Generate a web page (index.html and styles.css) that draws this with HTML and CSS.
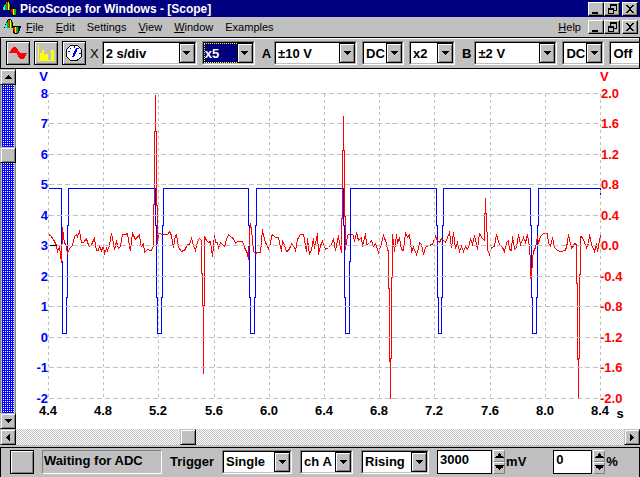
FILE: index.html
```
<!DOCTYPE html>
<html lang="en">
<head>
  <meta charset="UTF-8">
  <title>PicoScope for Windows - [Scope]</title>
  <link rel="stylesheet" href="styles.css">
</head>
<body>
  <!-- shared shapes -->
  <svg class="defs" aria-hidden="true">
    <symbol id="wave" viewBox="0 0 18 16">
      <path d="M0 8h1V5h1V3h1V1h1V0h3v1h1v2h1v4h8v2h-1v3h-1v2h-1v1h-4v-1h-1v-2H9V9H0z" fill="#000"/>
      <path d="M1 6h1V4h1v5H1z" fill="#00ffff"/>
      <path d="M3 3h1V1h1v8H3z" fill="#00c000"/>
      <path d="M5 1h1v8H5z" fill="#ff0000"/>
      <path d="M6 1h1v8H6z" fill="#ffff00"/>
      <path d="M7 3h1v6H7z" fill="#00c000"/>
      <path d="M9 8h1v3H9z" fill="#ff0000"/>
      <path d="M10 8h1v5h-1z" fill="#ff0000"/>
      <path d="M11 8h1v6h-1z" fill="#ffff00"/>
      <path d="M12 8h2v6h-2z" fill="#00c000"/>
      <path d="M14 8h1v4h-1z" fill="#0000ff"/>
    </symbol>
    <symbol id="min" viewBox="0 0 12 10"><path d="M2 8h6v2H2z"/></symbol>
    <symbol id="restore" viewBox="0 0 12 10">
      <path d="M4 0h7v7H8v3H2V4h2zM5 2v2h3v2h2V2zM3 6v3h4V6z" fill-rule="evenodd"/>
    </symbol>
    <symbol id="close" viewBox="0 0 12 10">
      <path d="M2 1h2v1h1v1h2V2h1V1h2v1H9v1H8v1H7v2h1v1h1v1h1v1H8V8H7V7H5v1H4v1H2V8h1V7h1V6h1V4H4V3H3V2H2z"/>
    </symbol>
    <symbol id="down" viewBox="0 0 7 4"><path d="M0 0h7v1H6v1H5v1H4v1H3V3H2V2H1V1H0z"/></symbol>
    <symbol id="up" viewBox="0 0 7 4"><path d="M3 0h1v1h1v1h1v1h1v1H0V3h1V2h1V1h1z"/></symbol>
    <symbol id="left" viewBox="0 0 4 7"><path d="M4 0v7H3V6H2V5H1V4H0V3h1V2h1V1h1V0z"/></symbol>
    <symbol id="right" viewBox="0 0 4 7"><path d="M0 0h1v1h1v1h1v1h1v1H3v1H2v1H1v1H0z"/></symbol>
  </svg>

  <header class="titlebar">
    <svg class="wave"><use href="#wave"/></svg>
    <h1>PicoScope for Windows - [Scope]</h1>
    <div class="winbtns">
      <button aria-label="Minimize"><svg><use href="#min"/></svg></button>
      <button aria-label="Restore"><svg><use href="#restore"/></svg></button>
      <button class="x" aria-label="Close"><svg><use href="#close"/></svg></button>
    </div>
  </header>

  <nav class="menubar">
    <svg class="wave"><use href="#wave"/></svg>
    <button><u>F</u>ile</button>
    <button><u>E</u>dit</button>
    <button>Settings</button>
    <button><u>V</u>iew</button>
    <button><u>W</u>indow</button>
    <button>Examples</button>
    <button class="help"><u>H</u>elp</button>
    <div class="winbtns">
      <button aria-label="Minimize scope"><svg><use href="#min"/></svg></button>
      <button aria-label="Restore scope"><svg><use href="#restore"/></svg></button>
      <button class="x" aria-label="Close scope"><svg><use href="#close"/></svg></button>
    </div>
  </nav>

  <div class="toolbar">
    <div class="tools">
      <button class="tool" aria-label="Scope">
        <svg viewBox="0 0 20 20"><path d="M1 10V9h1V8h1V6h1V5h1V4h3v1h1v1h1v2h1v1h1v1h7v1h-1v2h-1v2h-1v1h-4v-1h-1v-1h-1v-2h-1v-2z" fill="#f00"/></svg>
      </button>
      <button class="tool" aria-label="Spectrum">
        <svg viewBox="0 0 20 20">
          <path d="M2 2h1v15h16v1H2z" fill="#ff0"/>
          <path d="M4 10h2V7h2v5h1v-1h3v6H4zM15 7h3v10h-3z" fill="#ff0"/>
        </svg>
      </button>
      <button class="tool" aria-label="Meter">
        <svg viewBox="0 0 20 20">
          <circle cx="10" cy="10" r="8" fill="#fff" stroke="#000"/>
          <path d="M4 8l2 1M6 5l1 1M10 3v2M15 5l-1 1M15 10h2" stroke="#00f" fill="none"/>
          <path d="M9 14l4-9" stroke="#00f" stroke-width="2"/>
        </svg>
      </button>
    </div>
    <label class="thin" for="timebase">X</label>
    <span class="combo w95"><select id="timebase"><option>2 s/div</option></select><i><svg><use href="#down"/></svg></i></span>
    <span class="combo w53 active"><select aria-label="X zoom"><option>x5</option></select><i><svg><use href="#down"/></svg></i></span>
    <label for="rangeA">A</label>
    <span class="combo w83"><select id="rangeA"><option>±10 V</option></select><i><svg><use href="#down"/></svg></i></span>
    <span class="combo w42"><select aria-label="A coupling"><option>DC</option></select><i><svg><use href="#down"/></svg></i></span>
    <span class="combo w46"><select aria-label="A zoom"><option>x2</option></select><i><svg><use href="#down"/></svg></i></span>
    <label for="rangeB">B</label>
    <span class="combo w83"><select id="rangeB"><option>±2 V</option></select><i><svg><use href="#down"/></svg></i></span>
    <span class="combo w42"><select aria-label="B coupling"><option>DC</option></select><i><svg><use href="#down"/></svg></i></span>
    <span class="combo w53"><select aria-label="B zoom"><option>Off</option></select><i><svg><use href="#down"/></svg></i></span>
  </div>

  <main class="scope">
    <div class="vscroll">
      <button class="arrow" aria-label="Scroll up"><svg class="h"><use href="#up"/></svg></button>
      <input type="range" min="0" max="312" value="62" aria-label="Vertical offset">
      <button class="arrow" aria-label="Scroll down"><svg class="h"><use href="#down"/></svg></button>
    </div>
    <svg class="plot" viewBox="16 69 624 360">
      <g class="lines" transform="translate(.5 .5)">
        <path class="chA" d="M48 188H61V261H62V333H66V297H67V225H68V188H155V225H156V297H157V333H161V297H162V225H163V188H248V225H249V297H250V333H254V297H255V225H256V188H343V225H344V297H345V333H349V261H350V188H436V225H437V297H438V333H441V297H442V225H443V188H530V225H531V297H532V333H536V297H537V225H538V188H600V194"/>
        <polyline class="chB" points="48,234 50,235 53,239 56,245 57,251 59,246 60,255 61,262 62,227 64,243 65,243 67,253 69,248 72,245 74,236 76,234 77,236 79,231 81,242 83,242 86,238 87,242 89,246 91,244 94,238 96,250 98,250 99,246 101,250 103,246 104,253 106,248 107,250 109,245 111,233 112,238 114,249 116,241 118,248 120,246 122,234 125,234 127,233 129,246 130,250 131,240 132,233 135,239 139,234 140,243 141,246 143,243 144,252 147,249 150,250 152,249 153,245 153,204 154,204 154,131 155,131 155,94 155,131 156,131 156,205 157,205 157,243 158,233
          159,233 162,234 167,234 169,231 171,235 173,247 175,235 176,234 178,247 181,251 183,250 184,250 187,244 189,244 191,238 193,245 195,250 197,241 199,238 201,240 201,273 202,273 202,305 203,305 203,373 203,305 204,305 204,236 206,240 208,242 210,241 212,256 214,234 215,242 217,242 218,248 220,242 223,245 224,246 226,239 228,234 231,237 233,238 235,243 237,241 242,241 244,247 246,251 247,253 248,259 249,233 250,223 252,238 253,251 255,253 257,252 260,252 262,229 263,235 265,242 268,248 270,243 271,236 272,234 275,237 278,237 279,242 281,251 282,240 284,245 286,251 288,250 290,246 291,243 293,245 295,250 297,239 300,234
          303,234 305,245 306,251 307,238 309,254 311,249 313,238 314,248 317,233 318,254 320,245 322,241 325,249 328,247 330,245 332,242 333,238 335,250 338,235 339,243 341,252 341,218 342,218 342,150 343,150 343,115 343,150 344,150 344,215 345,217 345,249 347,235 350,233 353,235 354,241 356,232 358,240 361,237 362,246 365,233 366,244 369,243 371,240 373,246 375,243 378,252 380,246 383,235 386,243 387,249 388,251 388,288 389,288 389,361 390,361 390,398 390,358 391,358 391,277 392,277 392,234 394,251 396,234 397,242 399,238 401,249 403,250 405,232 407,237 409,234 411,251 413,247 416,254 418,248 419,242 421,244 423,254 425,247 428,245 432,244 435,236 437,240 439,242 441,238 443,240 445,242 447,237 449,232
          451,247 453,232 455,248 457,242 459,251 461,246 463,251 465,246 467,249 469,244 470,238 472,244 474,235 476,243 477,249 479,233 482,238 484,240 484,213 485,213 485,197 485,213 486,213 487,249 489,254 491,247 494,246 496,234 499,244 502,247 504,251 506,242 508,240 509,249 511,250 512,236 514,249 516,247 518,234 520,244 523,237 525,242 527,234 529,247 530,262 530,278 531,278 532,258 533,251 535,247 537,236 538,243 540,236 543,233 547,233 548,243 550,246 552,237 554,247 557,250 560,251 565,250 567,242 568,234 571,248 572,247 574,243 576,244 576,283 577,283 577,359 578,359 578,398 578,358 579,358 579,274 580,274 580,236 582,237 584,242 586,247 588,243 589,234 591,244 594,251 596,243 597,251 600,235"/>
        <path class="grid rows" d="M48 93H600M48 123H600M48 154H600M48 184H600M48 215H600M48 245H600M48 276H600M48 306H600M48 337H600M48 367H600M48 398H600"/>
        <path class="grid cols" d="M48 93V398M103 93V398M158 93V398M214 93V398M269 93V398M324 93V398M379 93V398M434 93V398M490 93V398M545 93V398M600 93V398"/>
        <path class="mark" d="M49 245H56"/>
      </g>
      <g class="axis left">
        <text x="48" y="81">V</text>
        <text x="48" y="98">8</text>
        <text x="48" y="128">7</text>
        <text x="48" y="159">6</text>
        <text x="48" y="189">5</text>
        <text x="48" y="220">4</text>
        <text x="48" y="250">3</text>
        <text x="48" y="281">2</text>
        <text x="48" y="311">1</text>
        <text x="48" y="342">0</text>
        <text x="48" y="372">-1</text>
        <text x="48" y="403">-2</text>
      </g>
      <g class="axis right">
        <text x="600" y="81">V</text>
        <text x="601" y="98">2.0</text>
        <text x="601" y="128">1.6</text>
        <text x="601" y="159">1.2</text>
        <text x="601" y="189">0.8</text>
        <text x="601" y="220">0.4</text>
        <text x="601" y="250">0.0</text>
        <text x="600" y="281">-0.4</text>
        <text x="600" y="311">-0.8</text>
        <text x="600" y="342">-1.2</text>
        <text x="600" y="372">-1.6</text>
        <text x="600" y="403">-2.0</text>
      </g>
      <g class="axis bottom">
        <text x="48" y="415">4.4</text>
        <text x="103" y="415">4.8</text>
        <text x="158" y="415">5.2</text>
        <text x="214" y="415">5.6</text>
        <text x="269" y="415">6.0</text>
        <text x="324" y="415">6.4</text>
        <text x="379" y="415">6.8</text>
        <text x="434" y="415">7.2</text>
        <text x="490" y="415">7.6</text>
        <text x="545" y="415">8.0</text>
        <text x="600" y="415">8.4</text>
        <text x="620" y="418">s</text>
      </g>
    </svg>
  </main>

  <div class="hscroll">
    <button class="arrow" aria-label="Scroll left"><svg class="v"><use href="#left"/></svg></button>
    <input type="range" min="0" max="592" value="164" aria-label="Horizontal offset">
    <button class="arrow" aria-label="Scroll right"><svg class="v"><use href="#right"/></svg></button>
  </div>

  <footer class="status">
    <button class="tool" aria-label="Start or stop"></button>
    <output class="message">Waiting for ADC</output>
    <label for="trigger">Trigger</label>
    <span class="combo w70"><select id="trigger"><option>Single</option></select><i><svg><use href="#down"/></svg></i></span>
    <span class="combo w53"><select aria-label="Trigger channel"><option>ch A</option></select><i><svg><use href="#down"/></svg></i></span>
    <span class="combo w68"><select aria-label="Trigger direction"><option>Rising</option></select><i><svg><use href="#down"/></svg></i></span>
    <div class="field">
      <input class="wide" id="level" type="text" value="3000">
      <div class="spin">
        <button aria-label="Level up"><svg><use href="#up"/></svg></button>
        <button aria-label="Level down"><svg><use href="#down"/></svg></button>
      </div>
      <label for="level">mV</label>
    </div>
    <div class="field last">
      <input id="delay" type="text" value="0">
      <div class="spin">
        <button aria-label="Delay up"><svg><use href="#up"/></svg></button>
        <button aria-label="Delay down"><svg><use href="#down"/></svg></button>
      </div>
      <label for="delay">%</label>
    </div>
  </footer>
</body>
</html>
```
FILE: styles.css
```
* { box-sizing:border-box; }
html, body { margin:0; padding:0; height:100%; }
body {
  display:flex; flex-direction:column;
  background:#c0c0c0; color:#000;
  font-family:"Liberation Sans", Arial, sans-serif;
  font-size:13px; font-weight:bold;
  overflow:hidden;
}
button, input, select {
  font:inherit; color:inherit; margin:0; padding:0;
  border:0; border-radius:0; outline:0;
}
svg { display:block; shape-rendering:crispEdges; }
.defs { position:absolute; width:0; height:0; }
.wave { width:18px; height:16px; flex:none; }

/* title + menu */
.titlebar {
  display:flex; align-items:center; height:17px; flex:none;
  padding:0 2px; background:#000080; color:#fff;
}
.titlebar h1 { margin:0; font-size:12px; line-height:16px; flex:1; }
.winbtns { display:flex; flex:none; }
.winbtns button {
  width:16px; height:14px; padding:1px;
  background:#c0c0c0; color:#000;
  border:1px solid; border-color:#fff #000 #000 #fff;
  box-shadow:inset -1px -1px #808080;
}
.winbtns .x { margin-left:2px; }
.winbtns svg { width:12px; height:10px; }
.menubar {
  display:flex; align-items:center; gap:12px; height:20px; flex:none;
  padding:0 2px 0 4px;
}
.menubar > button {
  background:none; font-size:11px; font-weight:normal; line-height:16px;
}
.menubar .wave { margin-right:-8px; }
.menubar .help { margin-left:auto; }
.menubar .winbtns { margin-left:-5px; }

/* toolbar */
.toolbar {
  display:flex; align-items:center; gap:3px; height:32px; flex:none;
  padding:0 0 0 5px; border:1px solid #000;
  box-shadow:inset 0 1px #fff; overflow:hidden;
}
.tools { display:flex; gap:4px; }
.tool {
  width:24px; height:24px; flex:none; padding:1px;
  background:#c0c0c0; border:1px solid #000;
  box-shadow:inset 1px 1px #fff, inset -1px -1px #808080;
}
.tool svg { width:20px; height:20px; }
.toolbar label { padding-left:4px; }
.toolbar .thin { font-weight:normal; padding-left:1px; }
.toolbar .combo + .combo { margin-left:2px; }

.combo {
  display:grid; height:24px; flex:none;
  border:1px solid; border-color:#808080 #fff #fff #808080;
  background:#fff;
}
.combo select, .combo i { grid-area:1 / 1; }
.combo select {
  appearance:none; width:100%; height:100%;
  padding:0 16px 0 2px; background:#fff;
  border:1px solid; border-color:#000 #c0c0c0 #c0c0c0 #000;
}
.combo i {
  justify-self:end; display:grid; place-items:center;
  width:16px; margin:1px; pointer-events:none;
  background:#c0c0c0; border:1px solid #000;
  box-shadow:inset 1px 1px #fff, inset -1px -1px #808080;
}
.combo i svg { width:7px; height:4px; }
.active select {
  color:#fff; padding-left:1px;
  background:#000080; outline:1px dotted #ff0; outline-offset:-2px;
}
.w95 { width:95px; }
.w83 { width:83px; }
.w70 { width:70px; }
.w68 { width:68px; }
.w53 { width:53px; }
.w46 { width:46px; }
.w42 { width:42px; }

/* plot */
.scope { display:flex; flex:1; min-height:0; background:#fff; }
.plot { flex:1; min-width:0; height:100%; }
.lines path, .lines polyline { fill:none; stroke-width:1; }
.chA { stroke:#00f; }
.chB { stroke:#f00; }
.grid { stroke:#c0c0c0; }
.rows { stroke-dasharray:5 3; }
.cols { stroke-dasharray:3 3; }
.lines .mark { stroke:#000; }
.left { fill:#00f; text-anchor:end; }
.right { fill:#f00; }
.bottom { fill:#000; text-anchor:middle; }

/* scroll bars */
.arrow {
  display:grid; place-items:center; width:16px; height:16px; flex:none;
  background:#c0c0c0; border:1px solid; border-color:#c0c0c0 #000 #000 #c0c0c0;
  box-shadow:inset 1px 1px #fff, inset -1px -1px #808080;
}
.arrow .h { width:7px; height:4px; }
.arrow .v { width:4px; height:7px; }
.vscroll { display:flex; flex-direction:column; width:16px; flex:none; }
.hscroll { display:flex; height:16px; flex:none; }
input[type=range] { appearance:none; flex:1; min-width:0; min-height:0; }
input[type=range]::-webkit-slider-thumb {
  appearance:none; width:16px; height:16px;
  background:#c0c0c0; border:1px solid; border-color:#c0c0c0 #000 #000 #c0c0c0;
  box-shadow:inset 1px 1px #fff, inset -1px -1px #808080;
}
.vscroll input {
  writing-mode:vertical-lr; width:16px;
  background:
    linear-gradient(90deg, #808080 1px, #c0c0c0 1px 2px, transparent 2px 14px, #c0c0c0 14px 15px, #808080 15px),
    conic-gradient(#fff 25%, #00f 0) 0 0 / 2px 2px;
}
.hscroll input {
  height:16px;
  background:repeating-conic-gradient(#c0c0c0 0 25%, #fff 0 50%) 0 0 / 2px 2px;
}

/* status bar */
.status {
  display:flex; align-items:center; height:30px; flex:none;
  margin-top:2px; padding:0 0 2px 9px;
  border:1px solid #000; border-bottom:0;
}
.message {
  width:120px; height:24px; margin:0 8px; padding-left:1px; line-height:20px;
  border:1px solid; border-color:#808080 #fff #fff #808080;
}
.status .combo { margin-right:8px; }
.status > label { margin-right:8px; }
.field { display:flex; align-items:center; }
.field.last { margin-left:27px; }
.field input {
  width:39px; height:24px; padding:0 0 4px 2px;
  background:#fff; border:1px solid #000;
}
.field .wide { width:55px; }
.field label { margin-left:1px; }
.spin { display:flex; flex-direction:column; margin-left:1px; }
.spin button {
  display:grid; place-items:center; width:12px; height:12px;
  background:#c0c0c0; border:1px solid; border-color:#fff #808080 #808080 #fff;
}
.spin svg { width:9px; height:5px; }
```
